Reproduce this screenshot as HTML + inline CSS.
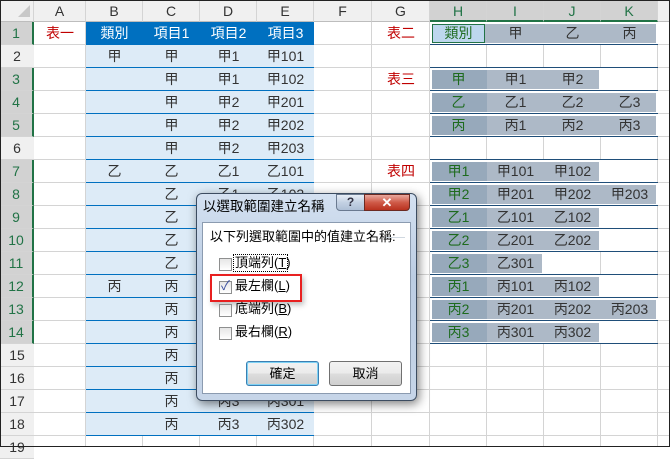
<!DOCTYPE html>
<html><head><meta charset="utf-8">
<style>
*{margin:0;padding:0;box-sizing:border-box}
body{width:670px;height:447px;overflow:hidden;background:#fff;position:relative;font-family:"Liberation Sans","Noto Sans CJK TC",sans-serif;font-size:14px;color:#333}
.a{position:absolute}
.c{position:absolute;height:23px;line-height:23px;text-align:center;white-space:nowrap}
.vl{position:absolute;top:0;width:1px;height:447px;background:#d4d4d4}
.hl{position:absolute;left:0;width:670px;height:1px;background:#d4d4d4}
.rh{position:absolute;left:0;width:34px;height:23px;line-height:23px;text-align:center;font-size:14px;color:#333;background:#f0f0f0;border-bottom:1px solid #d4d4d4}
.rh.s{background:#d2d2d2;color:#217346;border-right:2px solid #217346}
.ch{position:absolute;top:0;height:22px;line-height:22px;text-align:center;background:#f0f0f0;border-right:1px solid #d4d4d4;border-bottom:1px solid #bdbdbd;color:#333}
.ch.s{background:#d2d2d2;color:#217346;border-bottom:2px solid #217346}
.b1{position:absolute;left:86px;width:228px;height:1px;background:#0070c0}
.g{position:absolute;height:23px;background:#adb9c7;box-shadow:inset 0 0 0 2px #fff}
.gh{position:absolute;height:19px;background:#97a9bb;left:432px;width:55px}
.nl{position:absolute;left:430px;width:228px;height:1px;background:#1f4e79}
.red{color:#c00000}
.grn{color:#1e6b1e}
.cb{position:absolute;width:13px;height:13px;border:1px solid #8e8f8f;background:linear-gradient(#e6e6e6,#fff)}
.btn{position:absolute;height:25px;border:1px solid #707070;border-radius:3px;background:linear-gradient(#f2f2f2,#ebebeb 50%,#dddddd 51%,#cfcfcf);text-align:center;line-height:23px;font-size:13px;color:#000}
</style></head><body>
<!-- grid lines -->
<div class="vl" style="left:85px"></div><div class="vl" style="left:142px"></div><div class="vl" style="left:199px"></div><div class="vl" style="left:256px"></div><div class="vl" style="left:313px"></div><div class="vl" style="left:371px"></div><div class="vl" style="left:429px"></div><div class="vl" style="left:486px"></div><div class="vl" style="left:543px"></div><div class="vl" style="left:600px"></div><div class="vl" style="left:657px"></div>
<div class="hl" style="top:44px"></div><div class="hl" style="top:67px"></div><div class="hl" style="top:90px"></div><div class="hl" style="top:113px"></div><div class="hl" style="top:136px"></div><div class="hl" style="top:159px"></div><div class="hl" style="top:182px"></div><div class="hl" style="top:205px"></div><div class="hl" style="top:228px"></div><div class="hl" style="top:251px"></div><div class="hl" style="top:274px"></div><div class="hl" style="top:297px"></div><div class="hl" style="top:320px"></div><div class="hl" style="top:343px"></div><div class="hl" style="top:366px"></div><div class="hl" style="top:389px"></div><div class="hl" style="top:412px"></div><div class="hl" style="top:435px"></div>

<!-- table 1 -->
<div class="a" style="left:86px;top:22px;width:228px;height:23px;background:#0070c0"></div>
<div class="a" style="left:86px;top:45px;width:228px;height:391px;background:#ddebf7"></div>
<div class="b1" style="top:67px"></div><div class="b1" style="top:90px"></div><div class="b1" style="top:113px"></div><div class="b1" style="top:136px"></div><div class="b1" style="top:159px"></div><div class="b1" style="top:182px"></div><div class="b1" style="top:205px"></div><div class="b1" style="top:228px"></div><div class="b1" style="top:251px"></div><div class="b1" style="top:274px"></div><div class="b1" style="top:297px"></div><div class="b1" style="top:320px"></div><div class="b1" style="top:343px"></div><div class="b1" style="top:366px"></div><div class="b1" style="top:389px"></div><div class="b1" style="top:412px"></div><div class="b1" style="top:435px"></div>

<!-- headers -->
<div class="ch" style="left:0;width:34px;background:#f0f0f0"></div>
<div class="a" style="left:18px;top:5px;width:0;height:0;border-left:12px solid transparent;border-bottom:12px solid #c8c8c8"></div>
<div class="ch" style="left:34px;width:52px">A</div><div class="ch" style="left:86px;width:57px">B</div><div class="ch" style="left:143px;width:57px">C</div><div class="ch" style="left:200px;width:57px">D</div><div class="ch" style="left:257px;width:57px">E</div><div class="ch" style="left:314px;width:58px">F</div><div class="ch" style="left:372px;width:58px">G</div>
<div class="ch s" style="left:430px;width:57px">H</div><div class="ch s" style="left:487px;width:57px">I</div><div class="ch s" style="left:544px;width:57px">J</div><div class="ch s" style="left:601px;width:57px">K</div><div class="ch" style="left:658px;width:12px"></div>

<div class="rh s" style="top:22px">1</div><div class="rh" style="top:45px">2</div><div class="rh s" style="top:68px">3</div><div class="rh s" style="top:91px">4</div><div class="rh s" style="top:114px">5</div><div class="rh" style="top:137px">6</div><div class="rh s" style="top:160px">7</div><div class="rh s" style="top:183px">8</div><div class="rh s" style="top:206px">9</div><div class="rh s" style="top:229px">10</div><div class="rh s" style="top:252px">11</div><div class="rh s" style="top:275px">12</div><div class="rh s" style="top:298px">13</div><div class="rh s" style="top:321px">14</div><div class="rh" style="top:344px">15</div><div class="rh" style="top:367px">16</div><div class="rh" style="top:390px">17</div><div class="rh" style="top:413px">18</div><div class="rh" style="top:436px">19</div>

<!-- table1 text -->
<div class="c red" style="left:34px;top:22px;width:52px">表一</div>
<div class="c" style="left:86px;top:22px;width:57px;color:#fff">類別</div><div class="c" style="left:143px;top:22px;width:57px;color:#fff">項目1</div><div class="c" style="left:200px;top:22px;width:57px;color:#fff">項目2</div><div class="c" style="left:257px;top:22px;width:57px;color:#fff">項目3</div>
<div class="c" style="left:86px;top:45px;width:57px">甲</div><div class="c" style="left:143px;top:45px;width:57px">甲</div><div class="c" style="left:200px;top:45px;width:57px">甲1</div><div class="c" style="left:257px;top:45px;width:57px">甲101</div>
<div class="c" style="left:143px;top:68px;width:57px">甲</div><div class="c" style="left:200px;top:68px;width:57px">甲1</div><div class="c" style="left:257px;top:68px;width:57px">甲102</div>
<div class="c" style="left:143px;top:91px;width:57px">甲</div><div class="c" style="left:200px;top:91px;width:57px">甲2</div><div class="c" style="left:257px;top:91px;width:57px">甲201</div>
<div class="c" style="left:143px;top:114px;width:57px">甲</div><div class="c" style="left:200px;top:114px;width:57px">甲2</div><div class="c" style="left:257px;top:114px;width:57px">甲202</div>
<div class="c" style="left:143px;top:137px;width:57px">甲</div><div class="c" style="left:200px;top:137px;width:57px">甲2</div><div class="c" style="left:257px;top:137px;width:57px">甲203</div>
<div class="c" style="left:86px;top:160px;width:57px">乙</div><div class="c" style="left:143px;top:160px;width:57px">乙</div><div class="c" style="left:200px;top:160px;width:57px">乙1</div><div class="c" style="left:257px;top:160px;width:57px">乙101</div>
<div class="c" style="left:143px;top:183px;width:57px">乙</div><div class="c" style="left:200px;top:183px;width:57px">乙1</div><div class="c" style="left:257px;top:183px;width:57px">乙102</div>
<div class="c" style="left:143px;top:206px;width:57px">乙</div><div class="c" style="left:143px;top:229px;width:57px">乙</div><div class="c" style="left:143px;top:252px;width:57px">乙</div>
<div class="c" style="left:86px;top:275px;width:57px">丙</div><div class="c" style="left:143px;top:275px;width:57px">丙</div>
<div class="c" style="left:143px;top:298px;width:57px">丙</div><div class="c" style="left:143px;top:321px;width:57px">丙</div><div class="c" style="left:143px;top:344px;width:57px">丙</div><div class="c" style="left:143px;top:367px;width:57px">丙</div>
<div class="c" style="left:143px;top:390px;width:57px">丙</div><div class="c" style="left:200px;top:390px;width:57px">丙3</div><div class="c" style="left:257px;top:390px;width:57px">丙301</div>
<div class="c" style="left:143px;top:413px;width:57px">丙</div><div class="c" style="left:200px;top:413px;width:57px">丙3</div><div class="c" style="left:257px;top:413px;width:57px">丙302</div>

<!-- right tables -->
<div class="c red" style="left:372px;top:22px;width:58px">表二</div>
<div class="c red" style="left:372px;top:68px;width:58px">表三</div>
<div class="c red" style="left:372px;top:160px;width:58px">表四</div>

<div class="g" style="left:430px;top:22px;width:228px"></div>
<div class="a" style="left:432px;top:24px;width:53px;height:19px;background:#bdd7ee;border:1px solid #217346"></div>
<div class="nl" style="top:44px"></div>
<div class="g" style="left:430px;top:68px;width:171px"></div><div class="gh" style="top:70px"></div>
<div class="g" style="left:430px;top:91px;width:228px"></div><div class="gh" style="top:93px"></div>
<div class="g" style="left:430px;top:114px;width:228px"></div><div class="gh" style="top:116px"></div>
<div class="nl" style="top:67px"></div><div class="nl" style="top:90px"></div><div class="nl" style="top:113px"></div><div class="nl" style="top:136px"></div>
<div class="g" style="left:430px;top:160px;width:171px"></div><div class="gh" style="top:162px"></div>
<div class="g" style="left:430px;top:183px;width:228px"></div><div class="gh" style="top:185px"></div>
<div class="g" style="left:430px;top:206px;width:171px"></div><div class="gh" style="top:208px"></div>
<div class="g" style="left:430px;top:229px;width:171px"></div><div class="gh" style="top:231px"></div>
<div class="g" style="left:430px;top:252px;width:114px"></div><div class="gh" style="top:254px"></div>
<div class="g" style="left:430px;top:275px;width:171px"></div><div class="gh" style="top:277px"></div>
<div class="g" style="left:430px;top:298px;width:228px"></div><div class="gh" style="top:300px"></div>
<div class="g" style="left:430px;top:321px;width:171px"></div><div class="gh" style="top:323px"></div>
<div class="nl" style="top:159px"></div><div class="nl" style="top:182px"></div><div class="nl" style="top:205px"></div><div class="nl" style="top:228px"></div><div class="nl" style="top:251px"></div><div class="nl" style="top:274px"></div><div class="nl" style="top:297px"></div><div class="nl" style="top:320px"></div><div class="nl" style="top:343px"></div>

<div class="c grn" style="left:430px;top:22px;width:57px">類別</div><div class="c" style="left:487px;top:22px;width:57px">甲</div><div class="c" style="left:544px;top:22px;width:57px">乙</div><div class="c" style="left:601px;top:22px;width:57px">丙</div>
<div class="c grn" style="left:430px;top:68px;width:57px">甲</div><div class="c" style="left:487px;top:68px;width:57px">甲1</div><div class="c" style="left:544px;top:68px;width:57px">甲2</div>
<div class="c grn" style="left:430px;top:91px;width:57px">乙</div><div class="c" style="left:487px;top:91px;width:57px">乙1</div><div class="c" style="left:544px;top:91px;width:57px">乙2</div><div class="c" style="left:601px;top:91px;width:57px">乙3</div>
<div class="c grn" style="left:430px;top:114px;width:57px">丙</div><div class="c" style="left:487px;top:114px;width:57px">丙1</div><div class="c" style="left:544px;top:114px;width:57px">丙2</div><div class="c" style="left:601px;top:114px;width:57px">丙3</div>
<div class="c grn" style="left:430px;top:160px;width:57px">甲1</div><div class="c" style="left:487px;top:160px;width:57px">甲101</div><div class="c" style="left:544px;top:160px;width:57px">甲102</div>
<div class="c grn" style="left:430px;top:183px;width:57px">甲2</div><div class="c" style="left:487px;top:183px;width:57px">甲201</div><div class="c" style="left:544px;top:183px;width:57px">甲202</div><div class="c" style="left:601px;top:183px;width:57px">甲203</div>
<div class="c grn" style="left:430px;top:206px;width:57px">乙1</div><div class="c" style="left:487px;top:206px;width:57px">乙101</div><div class="c" style="left:544px;top:206px;width:57px">乙102</div>
<div class="c grn" style="left:430px;top:229px;width:57px">乙2</div><div class="c" style="left:487px;top:229px;width:57px">乙201</div><div class="c" style="left:544px;top:229px;width:57px">乙202</div>
<div class="c grn" style="left:430px;top:252px;width:57px">乙3</div><div class="c" style="left:487px;top:252px;width:57px">乙301</div>
<div class="c grn" style="left:430px;top:275px;width:57px">丙1</div><div class="c" style="left:487px;top:275px;width:57px">丙101</div><div class="c" style="left:544px;top:275px;width:57px">丙102</div>
<div class="c grn" style="left:430px;top:298px;width:57px">丙2</div><div class="c" style="left:487px;top:298px;width:57px">丙201</div><div class="c" style="left:544px;top:298px;width:57px">丙202</div><div class="c" style="left:601px;top:298px;width:57px">丙203</div>
<div class="c grn" style="left:430px;top:321px;width:57px">丙3</div><div class="c" style="left:487px;top:321px;width:57px">丙301</div><div class="c" style="left:544px;top:321px;width:57px">丙302</div>

<!-- dialog -->
<div class="a" style="left:196px;top:193px;width:221px;height:208px;border:1px solid #3c4c60;border-radius:6px;background:linear-gradient(#d4e1f1,#bccde3 40%,#c6d5e8);box-shadow:2px 3px 10px rgba(0,0,0,.5)"></div>
<div class="a" style="left:203px;top:199px;font-size:13.5px;color:#000;line-height:16px">以選取範圍建立名稱</div>
<div class="a" style="left:336px;top:194px;width:29px;height:17px;border:1px solid #6a7a90;border-radius:0 0 0 4px;background:linear-gradient(#e8eef6,#c3d1e3 50%,#aebfd6);text-align:center;font-size:12px;font-weight:bold;line-height:15px;color:#334">?</div>
<div class="a" style="left:364px;top:194px;width:46px;height:17px;border:1px solid #6b2a22;border-radius:0 0 4px 0;background:linear-gradient(#e9a89d,#cf5a48 50%,#b8321f);text-align:center;font-size:13px;font-weight:bold;line-height:15px;color:#fff">✕</div>
<div class="a" style="left:202px;top:222px;width:209px;height:172px;background:#fff;border:1px solid #8b9bb0"></div>
<div class="a" style="left:210px;top:229px;font-size:13px;color:#000;line-height:16px">以下列選取範圍中的值建立名稱:</div>
<div class="a" style="left:386px;top:237px;width:19px;height:1px;background:#d0d8e0"></div>
<div class="cb" style="left:219px;top:258px"></div>
<div class="a" style="left:233px;top:254px;width:55px;height:18px;border:1px dotted #000"></div>
<div class="a" style="left:235px;top:255px;font-size:13px;color:#000;line-height:16px">頂端列(<u>T</u>)</div>
<div class="cb" style="left:219px;top:281px"></div>
<div class="a" style="left:221px;top:278px;font-size:13px;color:#3a4fa0;line-height:16px">✓</div>
<div class="a" style="left:235px;top:278px;font-size:13px;color:#000;line-height:16px">最左欄(<u>L</u>)</div>
<div class="a" style="left:210px;top:274px;width:92px;height:28px;border:2px solid #e82020;box-shadow:2px 3px 5px rgba(0,0,0,.25)"></div>
<div class="cb" style="left:219px;top:304px"></div>
<div class="a" style="left:235px;top:301px;font-size:13px;color:#000;line-height:16px">底端列(<u>B</u>)</div>
<div class="cb" style="left:219px;top:327px"></div>
<div class="a" style="left:235px;top:324px;font-size:13px;color:#000;line-height:16px">最右欄(<u>R</u>)</div>
<div class="btn" style="left:246px;top:361px;width:73px;border-color:#3c7fb1;box-shadow:inset 0 0 0 1px #7ed2f5">確定</div>
<div class="btn" style="left:329px;top:361px;width:73px">取消</div>
<div class="a" style="left:0;top:0;width:670px;height:447px;border:1px solid #222"></div>
</body></html>
